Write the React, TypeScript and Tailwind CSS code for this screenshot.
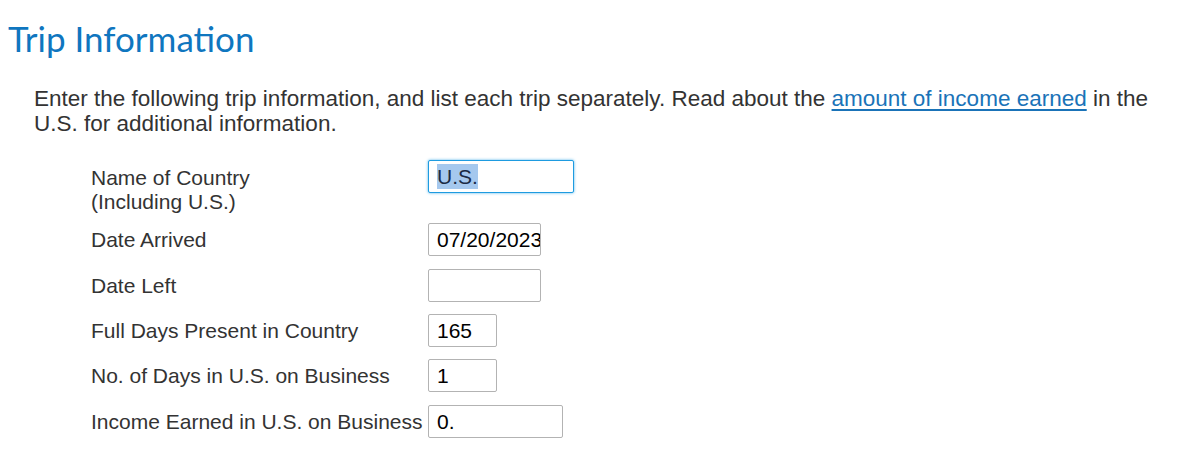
import { useState } from "react";

type Field = {
  label: string;
  value: string;
  width: string;
  extra?: string;
};

const fields: Field[] = [
  { label: "Date Arrived", value: "07/20/2023", width: "w-[113px]", extra: "mb-[1px]" },
  { label: "Date Left", value: "", width: "w-[113px]" },
  { label: "Full Days Present in Country", value: "165", width: "w-[69px]" },
  { label: "No. of Days in U.S. on Business", value: "1", width: "w-[69px]", extra: "mb-[1px]" },
  { label: "Income Earned in U.S. on Business", value: "0.", width: "w-[135px]" },
];

function FieldRow({ field }: { field: Field }): JSX.Element {
  const [value, setValue] = useState(field.value);
  return (
    <div className={`flex items-start ${field.extra ?? ""}`}>
      <label className="w-[337px] shrink-0 pt-[5px] leading-[24px]">{field.label}</label>
      <input
        type="text"
        value={value}
        onChange={(e) => setValue(e.target.value)}
        className={`${field.width} h-[33px] rounded-[2px] border border-[#b3b3b3] bg-white pl-[8px] pr-0 text-[21px] text-black outline-none`}
      />
    </div>
  );
}

export default function App(): JSX.Element {
  return (
    <div className="min-h-[465px] bg-white font-['Liberation_Sans',Arial,sans-serif] text-[#333]">
      <h1 className="px-[8px] pt-[16px] font-['Lato','Noto_Sans',sans-serif] text-[35px] leading-[44px] text-[#0f76bf]">
        Trip Information
      </h1>

      <p className="mt-[26px] pl-[34px] pr-[10px] text-[22.5px] leading-[25px]">
        Enter the following trip information, and list each trip separately. Read about the{" "}
        <a href="#" className="text-[#1a73b8] underline underline-offset-[3px]">
          amount of income earned
        </a>{" "}
        in the U.S. for additional information.
      </p>

      <div className="mt-[24px] flex flex-col gap-[12px] pl-[91px] text-[21px]">
        <div className="flex h-[51px] items-start">
          <label className="w-[337px] shrink-0 pt-[6px] leading-[24px]">
            Name of Country
            <br />
            (Including U.S.)
          </label>
          <div className="flex h-[33px] w-[146px] items-center rounded-[2px] border border-[#1e9be0] bg-white px-[8px] shadow-[0_0_3px_#4fb3ea] text-black">
            <span className="bg-[#a5c8ee] leading-[25px] text-[#1a2a44]">U.S.</span>
          </div>
        </div>
        {fields.map((f) => (
          <FieldRow key={f.label} field={f} />
        ))}
      </div>
    </div>
  );
}
